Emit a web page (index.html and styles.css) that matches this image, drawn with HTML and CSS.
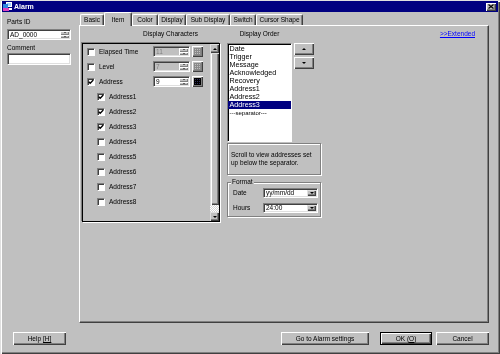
FILE: index.html
```html
<!DOCTYPE html>
<html>
<head>
<meta charset="utf-8">
<title>Alarm</title>
<link rel="stylesheet" href="styles.css">
</head>
<body>
<div class="window">
  <div class="titlebar">
    <svg class="app-icon" width="9" height="9" viewBox="0 0 9 9">
      <rect x="3" y="0" width="6" height="5" fill="#ffffff"/>
      <rect x="4" y="1" width="4" height="3" fill="#9fd4ff"/>
      <rect x="0" y="2" width="5" height="4" fill="#2f86e0"/>
      <rect x="0" y="6" width="6" height="3" fill="#e040c0"/>
      <rect x="6" y="6" width="3" height="2" fill="#ffffff"/>
    </svg>
    <span class="title">Alarm</span>
    <span class="close-btn">
      <svg width="6" height="5" viewBox="0 0 6 5"><path d="M0.5 0.5L5.5 4.5M5.5 0.5L0.5 4.5" stroke="#000" stroke-width="1.2"/></svg>
    </span>
  </div>

  <div class="main">
    <div class="left">
      <div class="lbl">Parts ID</div>
      <div class="field parts">
        <span class="val">AD_0000</span>
        <span class="spin"><i class="sb"><b class="tu"></b></i><i class="sb"><b class="td"></b></i></span>
      </div>
      <div class="lbl lbl-comment">Comment</div>
      <div class="field comment"></div>
    </div>

    <div class="right">
      <div class="tabs">
        <span class="tab w-basic">Basic</span>
        <span class="tab w-item active">Item</span>
        <span class="tab w-color">Color</span>
        <span class="tab w-display">Display</span>
        <span class="tab w-sub">Sub Display</span>
        <span class="tab w-switch">Switch</span>
        <span class="tab w-cursor">Cursor Shape</span>
      </div>

      <div class="panel">
        <div class="col-chars">
          <div class="caption chars-cap">Display Characters</div>
          <div class="chars-box">
            <div class="chars-list">
              <div class="row">
                <div class="opt"><span class="cb"></span><span>Elapsed Time</span></div>
                <div class="numfield off"><span class="val">11</span><span class="spin"><i class="sb"><b class="tu"></b></i><i class="sb"><b class="td"></b></i></span></div>
                <span class="gridbtn off"><svg width="7" height="7" viewBox="0 0 7 7"><path d="M0 .5H7M0 2.5H7M0 4.5H7M0 6.5H7M.5 0V7M2.5 0V7M4.5 0V7M6.5 0V7" stroke="#8a8a8a" stroke-width="1"/></svg></span>
              </div>
              <div class="row">
                <div class="opt"><span class="cb"></span><span>Level</span></div>
                <div class="numfield off"><span class="val">7</span><span class="spin"><i class="sb"><b class="tu"></b></i><i class="sb"><b class="td"></b></i></span></div>
                <span class="gridbtn off"><svg width="7" height="7" viewBox="0 0 7 7"><path d="M0 .5H7M0 2.5H7M0 4.5H7M0 6.5H7M.5 0V7M2.5 0V7M4.5 0V7M6.5 0V7" stroke="#8a8a8a" stroke-width="1"/></svg></span>
              </div>
              <div class="row">
                <div class="opt"><span class="cb"><svg width="6" height="6" viewBox="0 0 6 6"><path d="M0.7 2.7L2.2 4.3L5.3 1" fill="none" stroke="#000" stroke-width="1.3"/></svg></span><span>Address</span></div>
                <div class="numfield"><span class="val">9</span><span class="spin"><i class="sb"><b class="tu"></b></i><i class="sb"><b class="td"></b></i></span></div>
                <span class="gridbtn on"><svg width="7" height="7" viewBox="0 0 7 7"><rect width="7" height="7" fill="#30305a"/><path d="M0 .5H7M0 2.5H7M0 4.5H7M0 6.5H7M.5 0V7M2.5 0V7M4.5 0V7M6.5 0V7" stroke="#000" stroke-width="1"/></svg></span>
              </div>
              <div class="row sub">
                <div class="opt"><span class="cb"><svg width="6" height="6" viewBox="0 0 6 6"><path d="M0.7 2.7L2.2 4.3L5.3 1" fill="none" stroke="#000" stroke-width="1.3"/></svg></span><span>Address1</span></div>
              </div>
              <div class="row sub">
                <div class="opt"><span class="cb"><svg width="6" height="6" viewBox="0 0 6 6"><path d="M0.7 2.7L2.2 4.3L5.3 1" fill="none" stroke="#000" stroke-width="1.3"/></svg></span><span>Address2</span></div>
              </div>
              <div class="row sub">
                <div class="opt"><span class="cb"><svg width="6" height="6" viewBox="0 0 6 6"><path d="M0.7 2.7L2.2 4.3L5.3 1" fill="none" stroke="#000" stroke-width="1.3"/></svg></span><span>Address3</span></div>
              </div>
              <div class="row sub"><div class="opt"><span class="cb"></span><span>Address4</span></div></div>
              <div class="row sub"><div class="opt"><span class="cb"></span><span>Address5</span></div></div>
              <div class="row sub"><div class="opt"><span class="cb"></span><span>Address6</span></div></div>
              <div class="row sub"><div class="opt"><span class="cb"></span><span>Address7</span></div></div>
              <div class="row sub"><div class="opt"><span class="cb"></span><span>Address8</span></div></div>
            </div>
            <div class="vscroll">
              <span class="sbtn"><b class="tu big"></b></span>
              <span class="thumb"></span>
              <span class="track"></span>
              <span class="sbtn"><b class="td big"></b></span>
            </div>
          </div>
        </div>

        <div class="col-order">
          <div class="caption order-cap">Display Order</div>
          <div class="order-row">
            <div class="listbox">
              <div class="item">Date</div>
              <div class="item">Trigger</div>
              <div class="item">Message</div>
              <div class="item">Acknowledged</div>
              <div class="item">Recovery</div>
              <div class="item">Address1</div>
              <div class="item">Address2</div>
              <div class="item selected">Address3</div>
              <div class="item sep">---separator---</div>
            </div>
            <div class="order-btns">
              <span class="btn obtn"><b class="tu mid"></b></span>
              <span class="btn obtn"><b class="td mid"></b></span>
            </div>
          </div>
          <div class="note">Scroll to view addresses set<br>up below the separator.</div>
          <div class="group">
            <span class="legend">Format</span>
            <div class="frow">
              <span class="flbl">Date</span>
              <span class="combo"><span class="val">yy/mm/dd</span><span class="dd"><b class="td mid"></b></span></span>
            </div>
            <div class="frow">
              <span class="flbl">Hours</span>
              <span class="combo"><span class="val">24:00</span><span class="dd"><b class="td mid"></b></span></span>
            </div>
          </div>
        </div>

        <a class="extended">&gt;&gt;Extended</a>
      </div>
    </div>
  </div>

  <div class="footer">
    <span class="btn fbtn w-help">Help <span class="ul">[H]</span></span>
    <span class="spacer"></span>
    <span class="btn fbtn w-goto">Go to Alarm settings</span>
    <span class="btn fbtn w-ok default">OK (<span class="ul">O</span>)</span>
    <span class="btn fbtn w-cancel">Cancel</span>
  </div>
</div>
</body>
</html>
```

FILE: styles.css
```css
* { box-sizing: border-box; margin: 0; padding: 0; }
html, body { width: 500px; height: 354px; overflow: hidden; }
body {
  background: #c0c0c0;
  font-family: "Liberation Sans", Arial, sans-serif;
  font-size: 6.5px;
  line-height: 8px;
  color: #000;
}

.window {
  width: 500px;
  height: 354px;
  display: flex;
  flex-direction: column;
  padding: 1px 2px 0 2px;
  will-change: transform;
  box-shadow: inset 1px 1px #dfdfdf, inset 2px 2px #ffffff, inset -1px -1px #404040, inset -2px -2px #808080;
}

/* title bar */
.titlebar {
  height: 11px;
  flex: none;
  background: #000080;
  color: #fff;
  display: flex;
  align-items: center;
  padding: 0 2px 0 1px;
}
.app-icon { display: block; margin-right: 2px; }
.title { font-weight: bold; font-size: 7px; line-height: 9px; }
.close-btn {
  margin-left: auto;
  width: 10px;
  height: 8px;
  background: #c0c0c0;
  display: flex;
  align-items: center;
  justify-content: center;
  box-shadow: inset 1px 1px #fff, inset -1px -1px #404040, inset -2px -2px #808080;
}
.close-btn svg { display: block; }

/* main */
.main { display: flex; height: 311px; flex: none; }
.left { width: 77px; flex: none; padding: 6px 0 0 5px; }
.lbl { height: 8px; }
.lbl-comment { margin-top: 4px; }

.field {
  width: 64px;
  background: #fff;
  border: 1px solid;
  border-color: #808080 #fff #fff #808080;
  box-shadow: inset 1px 1px #404040, inset -1px -1px #dfdfdf;
  display: flex;
}
.field.parts { height: 11px; margin-top: 3px; padding: 1px 1px 1px 2px; line-height: 7px; }
.field.parts .val { flex: 1; }
.field.comment { height: 12px; margin-top: 1px; }

/* spinners */
.spin { width: 9px; display: flex; flex-direction: column; flex: none; }
.sb {
  flex: 1;
  background: #c0c0c0;
  box-shadow: inset 1px 1px #fff, inset -1px -1px #808080;
  display: flex;
  align-items: center;
  justify-content: center;
}
.tu, .td { display: block; width: 0; height: 0; border-left: 1.5px solid transparent; border-right: 1.5px solid transparent; }
.tu { border-bottom: 1.5px solid #000; }
.td { border-top: 1.5px solid #000; }
.tu.big, .td.big { border-left-width: 2px; border-right-width: 2px; }
.tu.big { border-bottom-width: 2px; }
.td.big { border-top-width: 2px; }
.tu.mid, .td.mid { border-left-width: 2.5px; border-right-width: 2.5px; }
.tu.mid { border-bottom-width: 2.5px; }
.td.mid { border-top-width: 2.5px; }

/* tabs */
.right { width: 410px; flex: none; display: flex; flex-direction: column; }
.tabs {
  display: flex;
  align-items: flex-end;
  height: 14px;
  padding-left: 1px;
  margin-bottom: -1px;
  position: relative;
  z-index: 1;
}
.tab {
  height: 11px;
  margin-bottom: 1px;
  text-align: center;
  white-space: nowrap;
  font-size: 6.5px;
  line-height: 9px;
  background: #c0c0c0;
  border-top: 1px solid #fff;
  border-left: 1px solid #fff;
  border-right: 1px solid #404040;
  border-radius: 2px 2px 0 0;
  box-shadow: inset -1px 0 #808080;
}
.tab.active { height: 14px; margin-bottom: 0; padding-top: 2px; }
.w-basic { width: 24px; }
.w-item { width: 28px; }
.w-color { width: 26px; }
.w-display { width: 28px; }
.w-sub { width: 44px; }
.w-switch { width: 26px; }
.w-cursor { width: 47px; }

/* panel */
.panel {
  height: 298px;
  border-top: 1px solid #fff;
  border-left: 1px solid #fff;
  border-right: 1px solid #404040;
  border-bottom: 1px solid #404040;
  box-shadow: inset -1px -1px #808080;
  display: flex;
  align-items: flex-start;
  padding: 4px 0 0 2px;
}
.caption { height: 8px; margin-bottom: 5px; white-space: nowrap; }
.col-chars { width: 138px; flex: none; }
.chars-cap { padding-left: 61px; }

.chars-box {
  height: 179px;
  border: 1px solid #000;
  box-shadow: -1px -1px 0 #808080, 1px 1px 0 #fff;
  display: flex;
}
.chars-list { flex: 1; }
.row { height: 15px; display: flex; align-items: center; padding-left: 4px; }
.row.sub { padding-left: 14px; }
.opt { width: 66px; display: flex; align-items: center; gap: 4px; white-space: nowrap; }
.cb {
  width: 8px;
  height: 8px;
  flex: none;
  background: #fff;
  border: 1px solid;
  border-color: #808080 #fff #fff #808080;
  box-shadow: inset 1px 1px #404040;
}
.cb svg { display: block; }

.numfield {
  width: 37px;
  height: 11px;
  background: #fff;
  border: 1px solid;
  border-color: #808080 #fff #fff #808080;
  box-shadow: inset 1px 1px #404040, inset -1px -1px #dfdfdf;
  padding: 1px;
  display: flex;
  line-height: 7px;
}
.numfield .val { flex: 1; padding-left: 1px; }
.numfield.off { background: #c0c0c0; color: #808080; }
.gridbtn {
  width: 11px;
  height: 11px;
  margin-left: 2px;
  background: #c0c0c0;
  box-shadow: inset 1px 1px #fff, inset -1px -1px #404040, inset -2px -2px #808080;
  display: flex;
  align-items: center;
  justify-content: center;
}
.gridbtn svg { display: block; }

.vscroll { width: 9px; flex: none; display: flex; flex-direction: column; }
.sbtn {
  height: 9px;
  flex: none;
  background: #c0c0c0;
  box-shadow: inset 1px 1px #dfdfdf, inset -1px -1px #404040, inset -2px -2px #808080;
  display: flex;
  align-items: center;
  justify-content: center;
}
.thumb {
  flex: 1;
  background: #c0c0c0;
  box-shadow: inset 1px 1px #dfdfdf, inset 2px 0 #fff, inset -1px -1px #404040, inset -2px -2px #808080;
}
.track {
  height: 7px;
  flex: none;
  background: repeating-conic-gradient(#ffffff 0 25%, #d4d4d4 0 50%) 0 0 / 2px 2px;
}

/* display order */
.col-order { width: 94px; flex: none; margin-left: 7px; }
.order-cap { width: 65px; text-align: center; }
.order-row { display: flex; align-items: flex-start; }
.listbox {
  width: 65px;
  height: 99px;
  background: #fff;
  border: 1px solid;
  border-color: #808080 #fff #fff #808080;
  box-shadow: inset 1px 1px #000;
  padding-top: 1px;
  font-size: 7.2px;
}
.item { height: 8px; line-height: 8px; padding-left: 1.5px; white-space: nowrap; }
.item.selected { background: #000080; color: #fff; }
.item.sep { font-size: 6px; }
.order-btns { margin-left: 2px; display: flex; flex-direction: column; gap: 2px; }
.btn {
  background: #c0c0c0;
  box-shadow: inset 1px 1px #fff, inset -1px -1px #404040, inset -2px -2px #808080;
  display: flex;
  align-items: center;
  justify-content: center;
  white-space: nowrap;
}
.obtn { width: 20px; height: 12px; }

.note {
  margin-top: 1px;
  height: 32px;
  border: 1px solid #808080;
  box-shadow: inset 1px 1px #fff, 1px 1px 0 #fff;
  padding: 7px 0 0 3px;
  white-space: nowrap;
}

.group {
  margin-top: 7px;
  height: 35px;
  border: 1px solid #808080;
  box-shadow: inset 1px 1px #fff, 1px 1px 0 #fff;
  padding-bottom: 3px;
}
.legend {
  display: table;
  margin: -5px 0 0 3px;
  padding: 0 1px;
  background: #c0c0c0;
  height: 8px;
}
.frow { display: flex; align-items: center; padding-left: 5px; height: 10px; margin-top: 5px; }
.legend + .frow { margin-top: 2px; }
.flbl { width: 30px; flex: none; }
.combo {
  width: 55px;
  height: 10px;
  background: #fff;
  border: 1px solid;
  border-color: #808080 #fff #fff #808080;
  box-shadow: inset 1px 1px #404040, inset -1px -1px #dfdfdf;
  padding: 1px;
  display: flex;
  line-height: 6px;
}
.combo .val { flex: 1; padding-left: 1px; white-space: nowrap; }
.dd {
  width: 9px;
  flex: none;
  background: #c0c0c0;
  box-shadow: inset 1px 1px #dfdfdf, inset -1px -1px #404040, inset -2px -2px #808080;
  display: flex;
  align-items: center;
  justify-content: center;
}

.extended {
  margin-left: auto;
  margin-right: 13px;
  color: #0000ff;
  text-decoration: underline;
  white-space: nowrap;
}

/* footer */
.footer {
  display: flex;
  height: 13px;
  flex: none;
  margin-top: 9px;
  padding: 0 9px 0 11px;
}
.spacer { flex: 1; }
.fbtn { height: 13px; line-height: 11px; }
.w-help { width: 53px; }
.w-goto { width: 88px; }
.w-ok { width: 52px; margin-left: 11px; }
.w-cancel { width: 53px; margin-left: 4px; }
.btn.default {
  border: 1px solid #000;
  box-shadow: inset 1px 1px #fff, inset -1px -1px #404040, inset -2px -2px #808080;
}
.ul { text-decoration: underline; }
.w-help .ul { margin-left: 2px; }
```
